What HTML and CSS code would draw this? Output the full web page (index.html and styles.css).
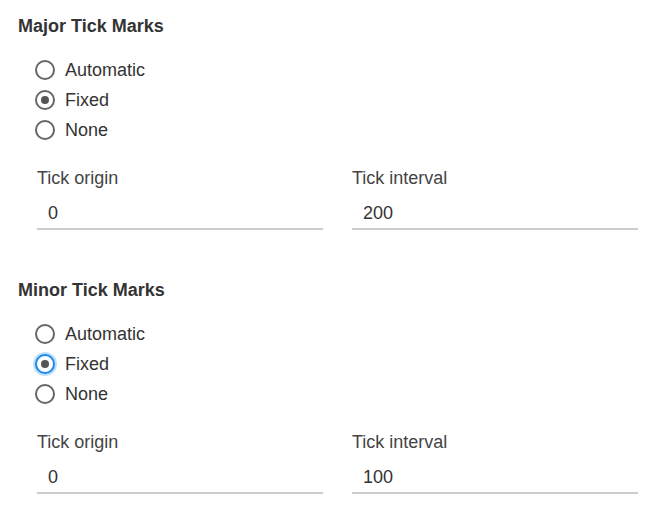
FILE: index.html
```html
<!DOCTYPE html>
<html>
<head>
<meta charset="utf-8">
<link rel="stylesheet" href="styles.css">
</head>
<body>
<div class="panel">
  <section class="group">
    <h2 class="group-title">Major Tick Marks</h2>
    <div class="radios">
      <label class="radio"><input type="radio" name="major"><span>Automatic</span></label>
      <label class="radio"><input type="radio" name="major" checked><span>Fixed</span></label>
      <label class="radio"><input type="radio" name="major"><span>None</span></label>
    </div>
    <div class="fields">
      <div class="field">
        <div class="field-label">Tick origin</div>
        <div class="field-input">0</div>
      </div>
      <div class="field">
        <div class="field-label">Tick interval</div>
        <div class="field-input">200</div>
      </div>
    </div>
  </section>
  <section class="group">
    <h2 class="group-title">Minor Tick Marks</h2>
    <div class="radios">
      <label class="radio"><input type="radio" name="minor"><span>Automatic</span></label>
      <label class="radio"><input type="radio" name="minor" class="focused" checked><span>Fixed</span></label>
      <label class="radio"><input type="radio" name="minor"><span>None</span></label>
    </div>
    <div class="fields">
      <div class="field">
        <div class="field-label">Tick origin</div>
        <div class="field-input">0</div>
      </div>
      <div class="field">
        <div class="field-label">Tick interval</div>
        <div class="field-input">100</div>
      </div>
    </div>
  </section>
</div>
</body>
</html>
```
FILE: styles.css
```css
* { box-sizing: border-box; }
html, body { margin: 0; padding: 0; background: #fff; }
body {
  font-family: "Liberation Sans", Arial, sans-serif;
  color: #333;
}
.panel {
  padding: 16px 25px 0 18px;
}
.group { margin-bottom: 50px; }
.group-title {
  margin: 0;
  font-size: 18px;
  line-height: 20px;
  font-weight: bold;
  color: #333;
}
.radios {
  display: flex;
  flex-direction: column;
  margin-top: 19px;
  padding-left: 17px;
}
.radio {
  display: flex;
  align-items: center;
  height: 30px;
  gap: 10px;
  font-size: 18px;
  color: #333;
}
.radio input {
  appearance: none;
  -webkit-appearance: none;
  margin: 0;
  width: 20px;
  height: 20px;
  border: 2px solid #666;
  border-radius: 50%;
  background: #fff;
  display: grid;
  place-items: center;
  flex: none;
}
.radio input:checked::after {
  content: "";
  width: 8px;
  height: 8px;
  border-radius: 50%;
  background: #555;
}
.radio input.focused {
  border-color: #1e88e5;
  box-shadow: 0 0 0 2px rgba(66, 165, 245, 0.35);
}
.fields {
  display: grid;
  grid-template-columns: 286px 286px;
  column-gap: 29px;
  margin-top: 22px;
  padding-left: 19px;
}
.field-label {
  font-size: 18px;
  line-height: 22px;
  color: #444;
}
.field-input {
  margin-top: 13px;
  padding-left: 11px;
  font-size: 18px;
  line-height: 22px;
  height: 28px;
  border-bottom: 2px solid #ccc;
  color: #333;
}
```
